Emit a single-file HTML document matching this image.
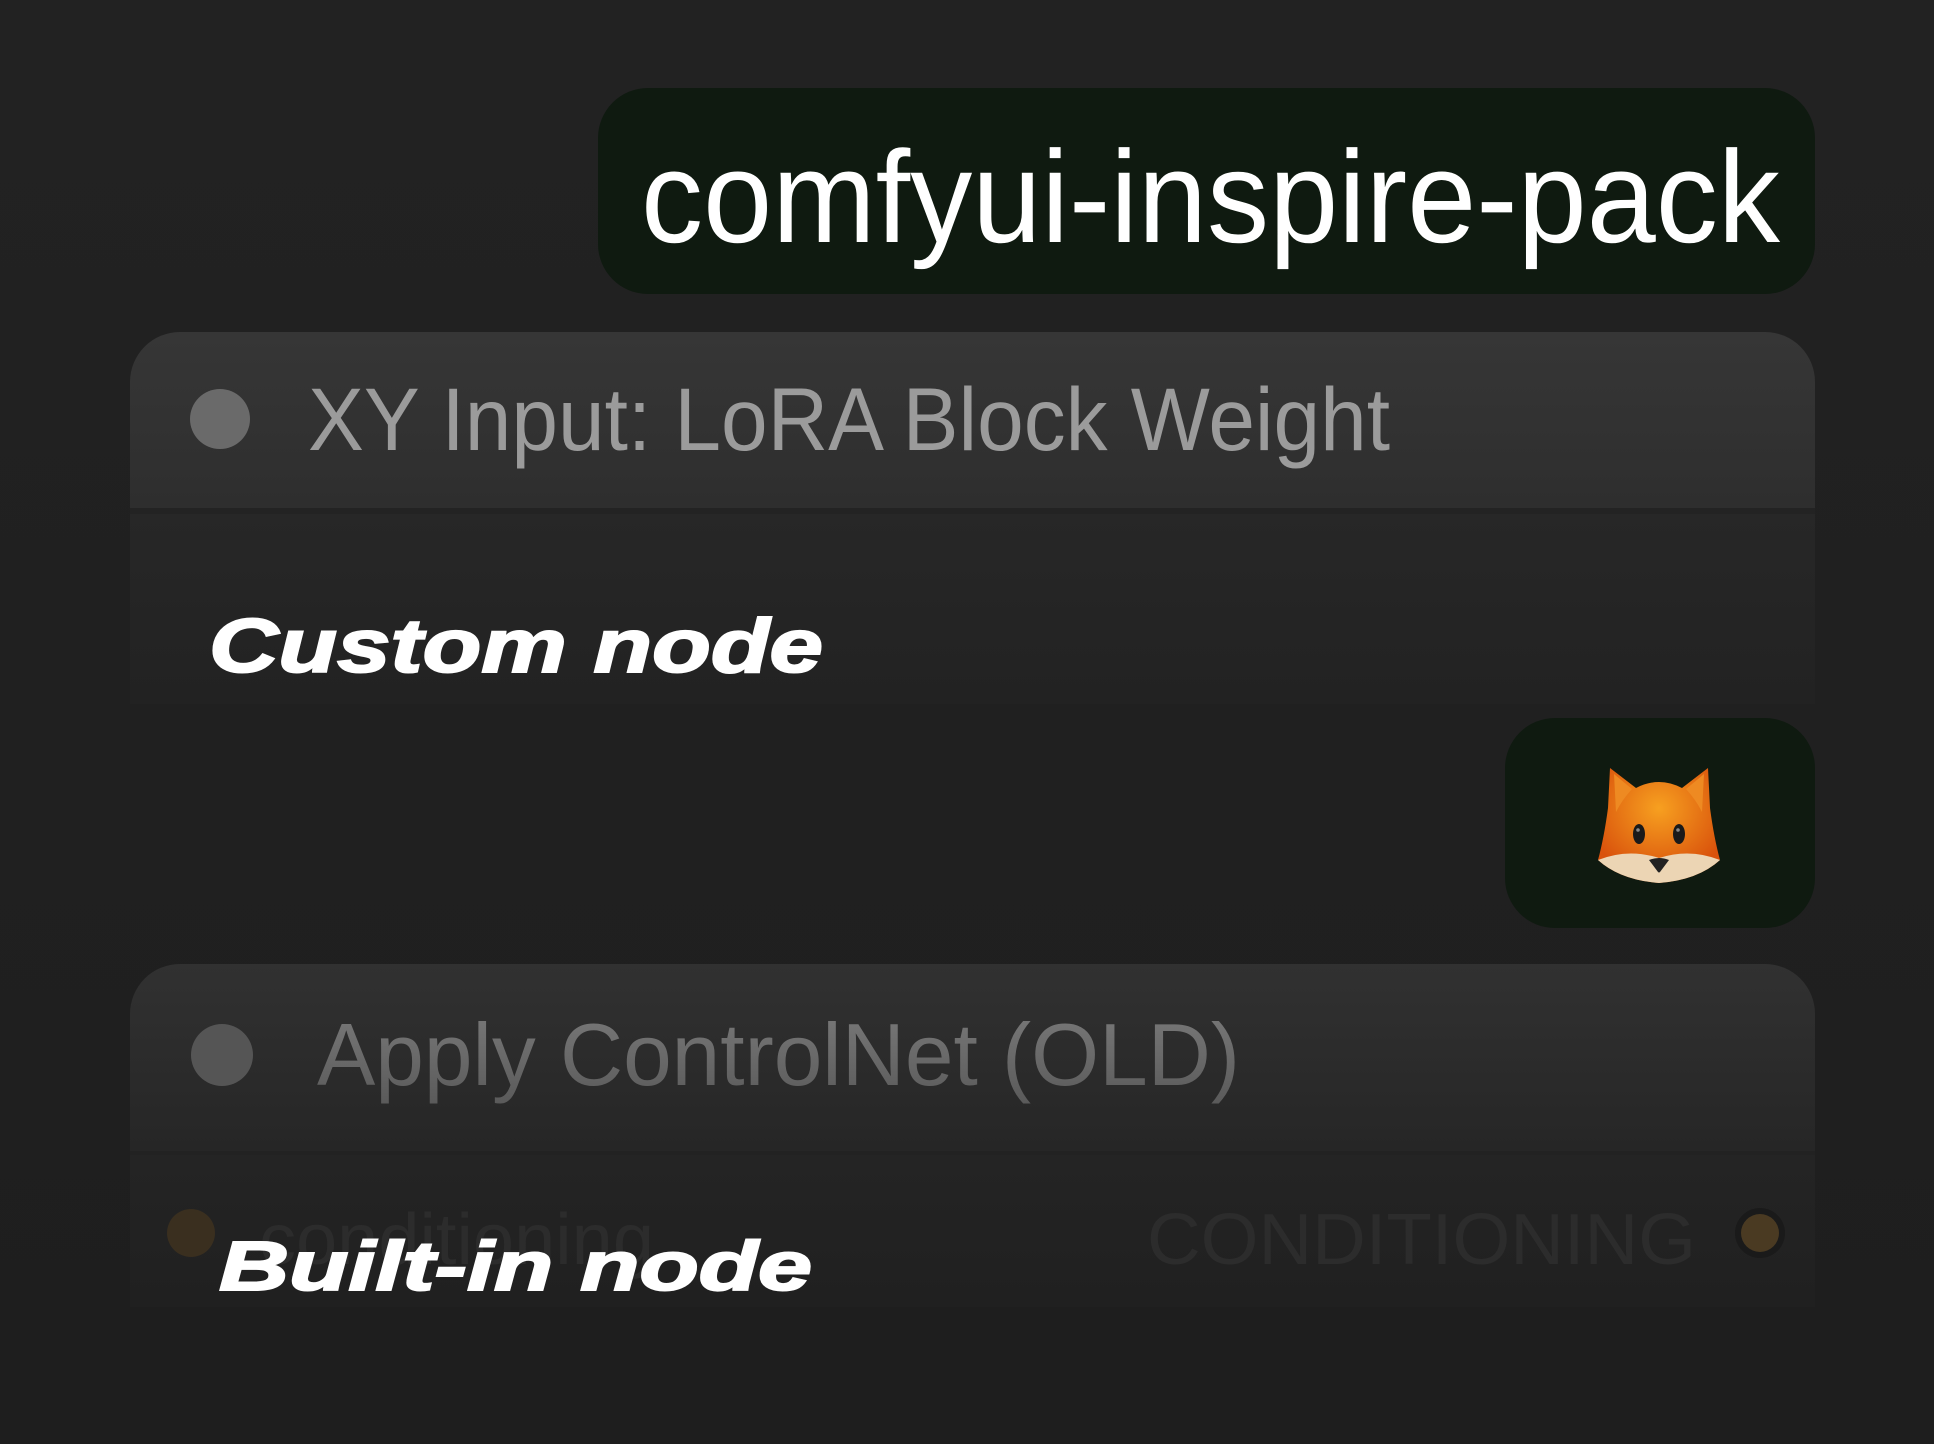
<!DOCTYPE html>
<html><head><meta charset="utf-8"><style>
html,body{margin:0;padding:0;background:#1f1f1f;width:1934px;height:1444px;overflow:hidden}
svg{display:block}
text{font-family:"Liberation Sans",sans-serif}
</style></head><body>
<svg width="1934" height="1444" viewBox="0 0 1934 1444" xmlns="http://www.w3.org/2000/svg">
<defs>
<linearGradient id="bg" x1="0" y1="0" x2="0" y2="1"><stop offset="0" stop-color="#222"/><stop offset="1" stop-color="#1e1e1e"/></linearGradient>
<linearGradient id="h1" x1="0" y1="0" x2="0" y2="1"><stop offset="0" stop-color="#363636"/><stop offset="1" stop-color="#2e2e2e"/></linearGradient>
<linearGradient id="b1" x1="0" y1="0" x2="0" y2="1"><stop offset="0" stop-color="#272727"/><stop offset="1" stop-color="#222"/></linearGradient>
<linearGradient id="h2" x1="0" y1="0" x2="0" y2="1"><stop offset="0" stop-color="#313131"/><stop offset="1" stop-color="#262626"/></linearGradient>
<linearGradient id="b2" x1="0" y1="0" x2="0" y2="1"><stop offset="0" stop-color="#242424"/><stop offset="1" stop-color="#202020"/></linearGradient>
<linearGradient id="t2" x1="0" y1="0" x2="0" y2="1"><stop offset="0" stop-color="#7a7a7a"/><stop offset="1" stop-color="#5a5a5a"/></linearGradient>
<radialGradient id="fox" cx="0.5" cy="0.35" r="0.6"><stop offset="0" stop-color="#f7a020"/><stop offset="1" stop-color="#d9520c"/></radialGradient>
</defs>
<rect width="1934" height="1444" fill="url(#bg)"/>

<rect x="598" y="88" width="1217" height="206" rx="50" fill="#0f1a10"/>
<text x="641" y="242" font-size="131" fill="#fff" textLength="1139" lengthAdjust="spacingAndGlyphs">comfyui-inspire-pack</text>

<path d="M130 382 a50 50 0 0 1 50 -50 H1765 a50 50 0 0 1 50 50 V508 H130 Z" fill="url(#h1)"/>
<rect x="130" y="508" width="1685" height="6" fill="#232323"/>
<rect x="130" y="514" width="1685" height="190" fill="url(#b1)"/>
<circle cx="220" cy="419" r="30" fill="#6a6a6a"/>
<text x="308" y="450" font-size="89" fill="#9b9b9b" textLength="1082" lengthAdjust="spacingAndGlyphs">XY Input: LoRA Block Weight</text>
<text x="209" y="672" font-size="76" font-weight="bold" font-style="italic" fill="#fff" textLength="614" lengthAdjust="spacingAndGlyphs" stroke="#fff" stroke-width="2">Custom node</text>

<rect x="1505" y="718" width="310" height="210" rx="50" fill="#0f1a10"/>
<g transform="translate(1598,768)">
  <path d="M12 0 L38 20 Q61 8 84 20 L110 0 L112 40 Q116 70 122 92 Q100 112 61 115 Q22 112 0 92 Q6 70 10 40 Z" fill="url(#fox)"/>
  <path d="M16 6 L34 21 Q24 32 18 44 Z" fill="#ee8a22"/>
  <path d="M106 6 L88 21 Q98 32 104 44 Z" fill="#ee8a22"/>
  <path d="M0 92 Q30 80 61 90 Q92 80 122 92 Q100 112 61 115 Q22 112 0 92 Z" fill="#ecd5b4"/>
  <ellipse cx="41" cy="66" rx="6" ry="10" fill="#1a1a1a"/>
  <ellipse cx="81" cy="66" rx="6" ry="10" fill="#1a1a1a"/>
  <circle cx="40" cy="62" r="1.8" fill="#888"/>
  <circle cx="80" cy="62" r="1.8" fill="#888"/>
  <path d="M51 92 Q61 88 71 92 L62 104 Q61 105 60 104 Z" fill="#222"/>
</g>

<path d="M130 1014 a50 50 0 0 1 50 -50 H1765 a50 50 0 0 1 50 50 V1151 H130 Z" fill="url(#h2)"/>
<rect x="130" y="1151" width="1685" height="4" fill="#222"/>
<rect x="130" y="1155" width="1685" height="152" fill="url(#b2)"/>
<circle cx="222" cy="1055" r="31" fill="#555"/>
<text x="317" y="1085" font-size="88" fill="url(#t2)" textLength="923" lengthAdjust="spacingAndGlyphs">Apply ControlNet (OLD)</text>
<circle cx="191" cy="1233" r="24" fill="#3a2f1f"/>
<circle cx="1760" cy="1233" r="25" fill="#1a1a1a"/>
<circle cx="1760" cy="1233" r="19" fill="#4a3a22"/>
<text x="259" y="1264" font-size="72" fill="#2c2c2c" textLength="395" lengthAdjust="spacingAndGlyphs">conditioning</text>
<text x="1147" y="1264" font-size="72" fill="#2c2c2c" textLength="549" lengthAdjust="spacingAndGlyphs">CONDITIONING</text>
<text x="219" y="1290" font-size="70" font-weight="bold" font-style="italic" fill="#fff" textLength="593" lengthAdjust="spacingAndGlyphs" stroke="#fff" stroke-width="2">Built-in node</text>
</svg>
</body></html>
